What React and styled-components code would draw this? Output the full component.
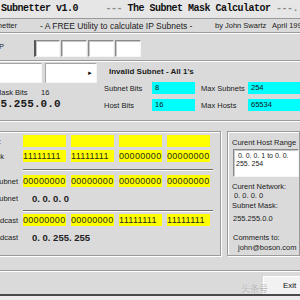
import React from "react";
import styled, { createGlobalStyle } from "styled-components";

const GlobalStyle = createGlobalStyle`
  html, body {
    margin: 0;
    padding: 0;
    width: 300px;
    height: 300px;
    overflow: hidden;
    background: #ececec;
  }
  body {
    font-family: "Liberation Sans", Arial, sans-serif;
    color: #1a1a1a;
  }
`;

const face = "#dadada";
const shade = "#9a9a9a";

const Window = styled.div`
  position: relative;
  width: 340px;
  height: 296px;
  margin-left: -40px;
  background: ${face};
  border-bottom: 2px solid #4a4a4a;
  box-sizing: border-box;
  display: flex;
  flex-direction: column;
`;

const TitleStrip = styled.div`
  height: 19px;
  box-sizing: border-box;
  padding-left: 41px;
  background: #e6e6e6;
  border-bottom: 1px solid ${shade};
  font-family: "Liberation Mono", "Courier New", monospace;
  font-weight: bold;
  font-size: 10px;
  letter-spacing: -0.5px;
  line-height: 18px;
  white-space: pre;
  color: #111;
`;

const Dash = styled.span`
  color: #8a8a8a;
`;

const SubtitleRow = styled.div`
  height: 14px;
  box-sizing: border-box;
  display: flex;
  align-items: center;
  border-bottom: 1px solid ${shade};
  box-shadow: 0 1px 0 #fff;
  font-size: 7.5px;
  white-space: nowrap;
`;

const Cell = styled.span`
  flex: none;
  width: ${(p) => (p.$w ? `${p.$w}px` : "auto")};
  padding-left: ${(p) => p.$pl || 0}px;
  text-align: ${(p) => p.$align || "left"};
  font-size: ${(p) => (p.$fs ? `${p.$fs}px` : "inherit")};
  box-sizing: border-box;
  white-space: pre;
`;

const IpRow = styled.div`
  height: 28px;
  box-sizing: border-box;
  display: flex;
  align-items: flex-start;
  padding-top: 7px;
  border-bottom: 1px solid ${shade};
  box-shadow: 0 1px 0 #fff;
`;

const RowLabel = styled.span`
  width: 44px;
  flex: none;
  text-align: right;
  font-size: 7.5px;
  line-height: 9px;
  margin-top: 2px;
`;

const OctetGroup = styled.div`
  display: flex;
  gap: 1px;
  margin-left: 30px;
`;

const Octet = styled.div`
  width: 26px;
  height: 17px;
  box-sizing: border-box;
  background: #fff;
  border: 1px solid;
  border-color: #8a8a8a #f6f6f6 #f6f6f6 #8a8a8a;
  box-shadow: inset 1px 1px 0 #c6c6c6;
  border-left: ${(p) => (p.$caret ? "2px solid #555" : "1px solid #8a8a8a")};
`;

const InfoBlock = styled.div`
  height: 60px;
  box-sizing: border-box;
  display: flex;
  border-bottom: 1px solid ${shade};
  box-shadow: 0 1px 0 #fff;
`;

const LeftCol = styled.div`
  width: 144px;
  flex: none;
  display: flex;
  flex-direction: column;
`;

const BoxRow = styled.div`
  display: flex;
  gap: 3px;
  margin-top: 2px;
`;

const Field = styled.div`
  width: ${(p) => p.$w}px;
  height: 20px;
  box-sizing: border-box;
  background: #fff;
  border: 1px solid;
  border-color: #a4a4a4 #f6f6f6 #f6f6f6 #a4a4a4;
  display: flex;
  align-items: center;
  justify-content: flex-end;
  padding-right: 3px;
  font-size: 6px;
  color: #111;
`;

const MaskBitsRow = styled.div`
  display: flex;
  margin-top: 5px;
  padding-left: 35px;
  font-size: 7.5px;
  line-height: 10px;
`;

const BigMask = styled.div`
  padding-left: 27px;
  font-family: "Liberation Mono", "Courier New", monospace;
  font-weight: bold;
  font-size: 11px;
  line-height: 13px;
  letter-spacing: 0.1px;
`;

const RightCol = styled.div`
  flex: 1;
  display: flex;
  flex-direction: column;
  padding-top: 5px;
`;

const Warning = styled.div`
  padding-left: 5px;
  font-weight: bold;
  font-size: 8px;
  line-height: 11px;
`;

const StatRow = styled.div`
  display: flex;
  align-items: center;
  margin-top: 5px;
  height: 12px;
  font-size: 7.5px;
`;

const StatLabel = styled.span`
  width: ${(p) => p.$w}px;
  padding-left: ${(p) => p.$pl || 0}px;
  box-sizing: border-box;
  flex: none;
`;

const CyanValue = styled.span`
  width: ${(p) => (p.$w ? `${p.$w}px` : "auto")};
  flex: ${(p) => (p.$w ? "none" : "1")};
  height: 12px;
  box-sizing: border-box;
  padding-left: 3px;
  background: #00ffff;
  line-height: 12px;
  font-size: 7.5px;
  color: #111;
`;

const GroupArea = styled.div`
  display: flex;
  padding-top: 10px;
  height: 135px;
  box-sizing: border-box;
`;

const GroupBox = styled.div`
  width: ${(p) => (p.$w ? `${p.$w}px` : "auto")};
  flex: ${(p) => (p.$w ? "none" : "1")};
  margin-left: ${(p) => p.$ml || 0}px;
  box-sizing: border-box;
  border: 1px solid ${shade};
  box-shadow: inset 1px 1px 0 #fff, 1px 1px 0 #fff;
  padding-left: ${(p) => p.$pl || 0}px;
  display: flex;
  flex-direction: column;
`;

const BitsRow = styled.div`
  display: grid;
  grid-template-columns: 57px repeat(4, 43px);
  column-gap: 5px;
  align-items: center;
  margin-top: ${(p) => p.$mt}px;
  height: 12px;
`;

const BitsLabel = styled.span`
  text-align: right;
  font-size: 7.5px;
  padding-right: ${(p) => p.$pr || 0}px;
  white-space: nowrap;
`;

const Bits = styled.span`
  height: 12px;
  background: #ffff00;
  font-size: 9px;
  letter-spacing: 0.3px;
  line-height: 12px;
  color: #2a2a1a;
  white-space: nowrap;
  overflow: hidden;
`;

const Dotted = styled.span`
  grid-column: 2 / span 4;
  padding-left: 9px;
  font-weight: bold;
  font-size: 9.5px;
  white-space: pre;
  color: #222;
`;

const Rule = styled.div`
  margin: ${(p) => p.$mt}px 0 0 62px;
  width: 190px;
  height: 1px;
  background: #6e6e6e;
  box-shadow: 0 1px 0 #fff;
`;

const InfoText = styled.div`
  margin-top: ${(p) => p.$mt || 0}px;
  padding-left: ${(p) => p.$indent || 0}px;
  font-size: 7.5px;
  line-height: 9px;
  white-space: pre;
  color: #1a1a1a;
`;

const RangeBox = styled.div`
  margin: 2px 0 0 1px;
  height: 28px;
  box-sizing: border-box;
  background: #fff;
  border: 1px solid;
  border-color: #8a8a8a #f6f6f6 #f6f6f6 #8a8a8a;
  box-shadow: inset 1px 1px 0 #c8c8c8;
  padding: 2px 2px;
  font-size: 7px;
  line-height: 8px;
  white-space: pre;
`;

const Footer = styled.div`
  flex: 1;
  display: flex;
  flex-direction: column;
`;

const FooterRule = styled.div`
  height: 14px;
  border-bottom: 1px solid ${shade};
  box-shadow: 0 1px 0 #fff;
`;

const ButtonRow = styled.div`
  display: flex;
  justify-content: flex-end;
  margin-top: 5px;
`;

const ExitButton = styled.div`
  width: 37px;
  height: 18px;
  box-sizing: border-box;
  background: #f2f2f2;
  border-top: 1px solid #fff;
  border-left: 1px solid #fff;
  padding-left: 19px;
  font-size: 8px;
  line-height: 17px;
  color: #111;
`;

const Watermark = styled.div`
  position: absolute;
  left: 281px;
  top: 284px;
  font-family: "Noto Sans CJK SC", sans-serif;
  font-size: 9px;
  line-height: 10px;
  color: rgba(130, 130, 130, 0.6);
  text-shadow: 0 0 1px #fff;
  white-space: nowrap;
`;

const bitRows = [
  { label: "IP:", values: ["", "", "", ""], pr: 17, mt: 3 },
  { label: "Mask", values: ["11111111", "11111111", "00000000", "00000000"], pr: 14, mt: 3 },
];

export default function App() {
  return (
    <>
      <GlobalStyle />
      <Window>
        <TitleStrip>
          {"Subnetter v1.0     "}
          <Dash>---</Dash>
          {" The Subnet Mask Calculator "}
          <Dash>---...</Dash>
        </TitleStrip>

        <SubtitleRow>
          <Cell $w={57} $align="right">Subnetter</Cell>
          <Cell $w={198} $pl={23} $fs={8.5}>- A FREE Utility to calculate IP Subnets -</Cell>
          <Cell>{"by John Swartz   April 1998"}</Cell>
        </SubtitleRow>

        <IpRow>
          <RowLabel>IP</RowLabel>
          <OctetGroup>
            <Octet $caret />
            <Octet />
            <Octet />
            <Octet />
          </OctetGroup>
        </IpRow>

        <InfoBlock>
          <LeftCol>
            <BoxRow>
              <Field $w={82} />
              <Field $w={52}>►</Field>
            </BoxRow>
            <MaskBitsRow>
              <Cell $w={46}>Mask Bits</Cell>
              <Cell>16</Cell>
            </MaskBitsRow>
            <BigMask>255.255.0.0</BigMask>
          </LeftCol>
          <RightCol>
            <Warning>Invalid Subnet - All 1's</Warning>
            <StatRow>
              <StatLabel $w={48}>Subnet Bits</StatLabel>
              <CyanValue $w={43}>8</CyanValue>
              <StatLabel $w={53} $pl={6}>Max Subnets</StatLabel>
              <CyanValue>254</CyanValue>
            </StatRow>
            <StatRow>
              <StatLabel $w={48}>Host Bits</StatLabel>
              <CyanValue $w={43}>16</CyanValue>
              <StatLabel $w={53} $pl={6}>Max Hosts</StatLabel>
              <CyanValue>65534</CyanValue>
            </StatRow>
          </RightCol>
        </InfoBlock>

        <GroupArea>
          <GroupBox $w={261}>
            {bitRows.map((r) => (
              <BitsRow key={r.label} $mt={r.mt}>
                <BitsLabel $pr={r.pr}>{r.label}</BitsLabel>
                {r.values.map((v, i) => (
                  <Bits key={i}>{v}</Bits>
                ))}
              </BitsRow>
            ))}
            <Rule $mt={7} />
            <BitsRow $mt={5}>
              <BitsLabel>Subnet</BitsLabel>
              <Bits>00000000</Bits>
              <Bits>00000000</Bits>
              <Bits>00000000</Bits>
              <Bits>00000000</Bits>
            </BitsRow>
            <BitsRow $mt={5}>
              <BitsLabel>Subnet</BitsLabel>
              <Dotted>0. 0. 0. 0</Dotted>
            </BitsRow>
            <Rule $mt={6} />
            <BitsRow $mt={3}>
              <BitsLabel>Broadcast</BitsLabel>
              <Bits>00000000</Bits>
              <Bits>00000000</Bits>
              <Bits>11111111</Bits>
              <Bits>11111111</Bits>
            </BitsRow>
            <BitsRow $mt={5}>
              <BitsLabel>Broadcast</BitsLabel>
              <Dotted>0. 0. 255. 255</Dotted>
            </BitsRow>
          </GroupBox>

          <GroupBox $ml={6} $pl={4}>
            <InfoText $mt={6}>Curent Host Range</InfoText>
            <RangeBox>{" 0. 0. 0. 1 to 0. 0.\n255. 254"}</RangeBox>
            <InfoText $mt={5}>Curent Network:</InfoText>
            <InfoText $indent={2}>0. 0. 0. 0</InfoText>
            <InfoText $mt={1}>Subnet Mask:</InfoText>
            <InfoText $mt={4} $indent={1}>255.255.0.0</InfoText>
            <InfoText $mt={10} $indent={1}>Comments to:</InfoText>
            <InfoText $mt={1} $indent={6}>john@boson.com</InfoText>
          </GroupBox>
        </GroupArea>

        <Footer>
          <FooterRule />
          <ButtonRow>
            <ExitButton>Exit</ExitButton>
          </ButtonRow>
        </Footer>

        <Watermark>头条号</Watermark>
      </Window>
    </>
  );
}
